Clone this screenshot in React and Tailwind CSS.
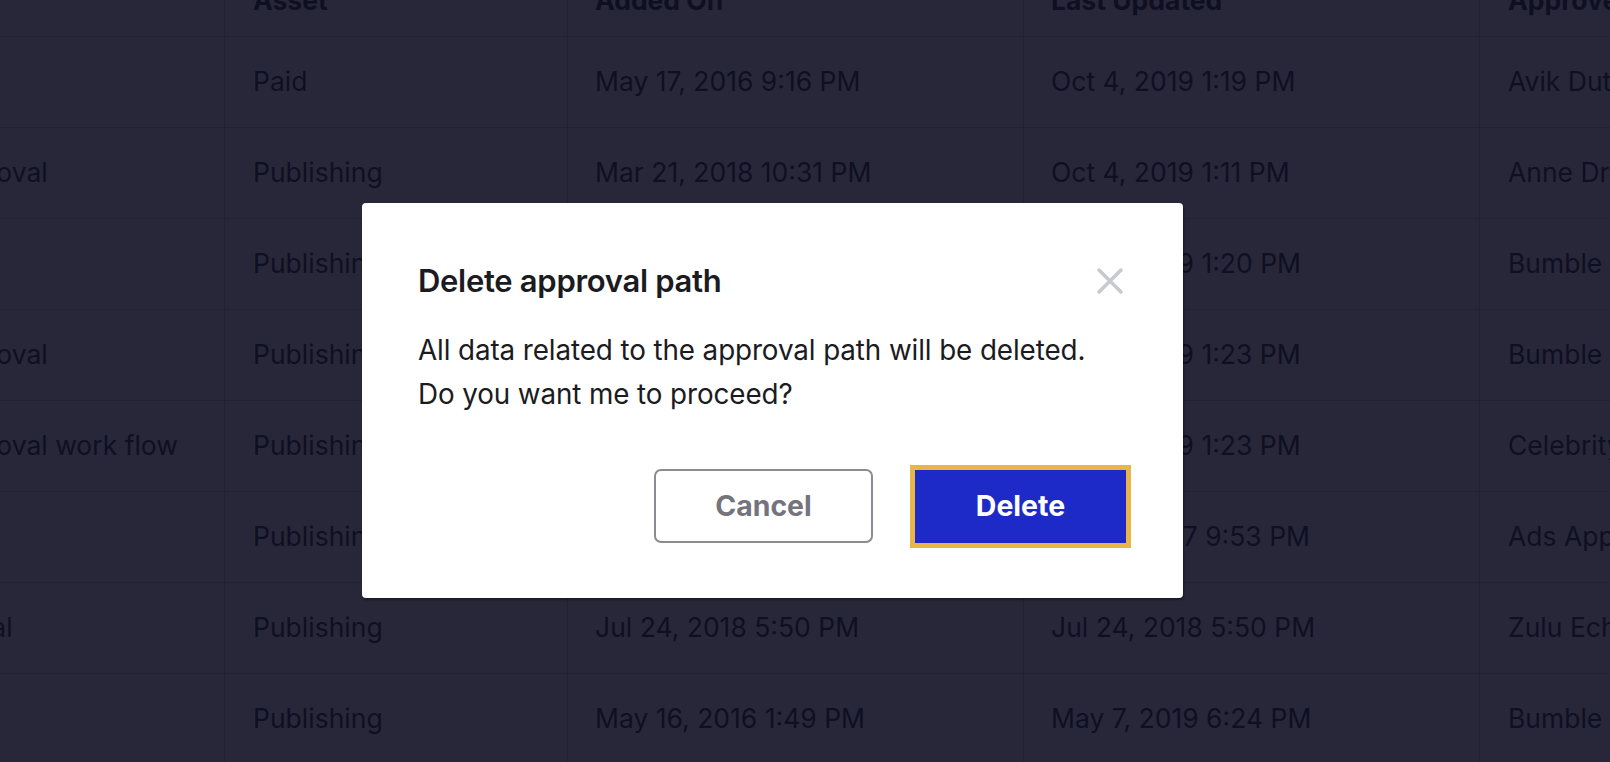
import React from "react";

const rows = [
  ["", "Paid", "May 17, 2016 9:16 PM", "Oct 4, 2019 1:19 PM", "Avik Dutta"],
  ["Approval", "Publishing", "Mar 21, 2018 10:31 PM", "Oct 4, 2019 1:11 PM", "Anne Drew"],
  ["", "Publishing", "Apr 2, 2018 3:12 PM", "Oct 4, 2019 1:20 PM", "Bumble Bee"],
  ["Approval", "Publishing", "Jan 9, 2019 4:40 PM", "Oct 4, 2019 1:23 PM", "Bumble Bee"],
  ["Approval work flow", "Publishing", "Feb 12, 2019 2:05 PM", "Oct 4, 2019 1:23 PM", "Celebrity"],
  ["", "Publishing", "Aug 3, 2017 9:53 PM", "Dec 8, 2017 9:53 PM", "Ads Approval"],
  ["Signal", "Publishing", "Jul 24, 2018 5:50 PM", "Jul 24, 2018 5:50 PM", "Zulu Echo"],
  ["", "Publishing", "May 16, 2016 1:49 PM", "May 7, 2019 6:24 PM", "Bumble Bee"],
];

function Row({ cells, header }) {
  const base = header
    ? "flex h-[72px] mt-[-35px] border-b border-[#212132]"
    : "flex h-[91px] border-b border-[#212132]";
  const txt = header ? "font-bold" : "font-normal";
  return (
    <div className={base}>
      <div className={`w-[317px] shrink-0 flex items-center pl-[28px] border-r border-[#212132] whitespace-nowrap overflow-hidden ${txt}`}>
        {cells[0]}
      </div>
      <div className={`w-[343px] shrink-0 flex items-center pl-[28px] border-r border-[#212132] whitespace-nowrap overflow-hidden ${txt}`}>
        {cells[1]}
      </div>
      <div className={`w-[456px] shrink-0 flex items-center pl-[27px] border-r border-[#212132] whitespace-nowrap overflow-hidden ${txt}`}>
        {cells[2]}
      </div>
      <div className={`w-[456px] shrink-0 flex items-center pl-[27px] border-r border-[#212132] whitespace-nowrap overflow-hidden ${txt}`}>
        {cells[3]}
      </div>
      <div className={`w-[300px] shrink-0 flex items-center pl-[28px] whitespace-nowrap overflow-hidden ${txt}`}>
        {cells[4]}
      </div>
    </div>
  );
}

export default function App() {
  return (
    <div
      className="relative w-[1610px] h-[762px] overflow-hidden bg-[#272739] text-[#0f0f22] text-[26.5px]"
      style={{ fontFamily: "Inter, 'Noto Sans', sans-serif" }}
    >
      <div className="ml-[-92px] flex flex-col">
        <Row header cells={["", "Asset", "Added On", "Last Updated", "Approvers"]} />
        {rows.map((r, i) => (
          <Row key={i} cells={r} />
        ))}
      </div>

      <div className="absolute left-[362px] top-[203px] w-[821px] h-[395px] bg-white rounded-[4px] shadow-[1px_2px_2px_rgba(0,0,0,0.35)] flex flex-col pt-[60px] pl-[56px] pr-[57px]">
        <div className="flex items-center justify-between h-[36px]">
          <h2 className="text-[31px] font-semibold text-[#1b1b22] leading-[36px] tracking-[-0.3px]">
            Delete approval path
          </h2>
          <svg width="28" height="28" viewBox="0 0 28 28" className="mr-[2px]">
            <path d="M3 3 L25 25 M25 3 L3 25" stroke="#c8c8d0" strokeWidth="3.5" strokeLinecap="round" />
          </svg>
        </div>
        <p className="mt-[29px] text-[27.8px] leading-[44px] text-[#1b1b22] tracking-[-0.1px]">
          All data related to the approval path will be deleted.
          <br />
          Do you want me to proceed?
        </p>
        <div className="mt-[53px] flex justify-end items-center gap-[42px]">
          <button className="w-[219px] h-[74px] rounded-[7px] border-2 border-[#8b8b94] bg-white text-[28.4px] font-bold text-[#74747e]">
            Cancel
          </button>
          <button className="w-[211px] h-[73px] bg-[#1e2ac8] text-white text-[28.5px] font-bold ring-[5px] ring-[#ebb449]">
            Delete
          </button>
        </div>
      </div>
    </div>
  );
}
